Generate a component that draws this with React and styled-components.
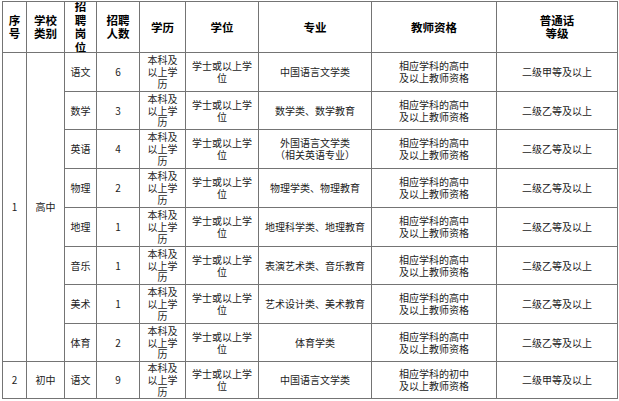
import React from 'react';
import styled, { createGlobalStyle } from 'styled-components';

const GlobalStyle = createGlobalStyle`
  html, body {
    margin: 0;
    padding: 0;
    background: #fff;
  }
  body {
    font-family: "Noto Sans CJK SC", "Noto Sans", sans-serif;
  }
`;

const Wrapper = styled.div`
  padding: 1px 0 0 2px;
`;

const Grid = styled.div`
  display: grid;
  grid-template-columns: 23px 37px 31px 42px 45px 72px 112px 124px 120px;
  grid-template-rows: 50px 38px 37px 38px 38px 38px 37px 38px 37px 36px;
  gap: 1px;
  padding: 1px;
  background: #747474;
  width: max-content;
`;

const Cell = styled.div`
  background: #fff;
  display: flex;
  flex-direction: column;
  align-items: center;
  justify-content: center;
  text-align: center;
  overflow: hidden;
  color: #222;
  font-size: 10px;
  line-height: 11.8px;
  grid-row: ${p => (p.$span ? `span ${p.$span}` : 'auto')};
`;

const HeadCell = styled(Cell)`
  color: #000;
  font-weight: 700;
  font-size: 11.5px;
  line-height: ${p => (p.$tight ? '13.5px' : '13px')};
`;

const Line = styled.span`
  display: block;
  white-space: nowrap;
`;

const headers = [
  ['序', '号'],
  ['学校', '类别'],
  ['招', '聘', '岗', '位'],
  ['招聘', '人数'],
  ['学历'],
  ['学位'],
  ['专业'],
  ['教师资格'],
  ['普通话', '等级'],
];

const highRows = [
  { subject: '语文', count: 6, major: ['中国语言文学类'], level: '二级甲等及以上' },
  { subject: '数学', count: 3, major: ['数学类、数学教育'], level: '二级乙等及以上' },
  { subject: '英语', count: 4, major: ['外国语言文学类', '（相关英语专业）'], level: '二级乙等及以上' },
  { subject: '物理', count: 2, major: ['物理学类、物理教育'], level: '二级乙等及以上' },
  { subject: '地理', count: 1, major: ['地理科学类、地理教育'], level: '二级乙等及以上' },
  { subject: '音乐', count: 1, major: ['表演艺术类、音乐教育'], level: '二级乙等及以上' },
  { subject: '美术', count: 1, major: ['艺术设计类、美术教育'], level: '二级乙等及以上' },
  { subject: '体育', count: 2, major: ['体育学类'], level: '二级乙等及以上' },
];

const Lines = ({ items }) => items.map((t, i) => <Line key={i}>{t}</Line>);

const RowCells = ({ row, stage }) => (
  <>
    <Cell>{row.subject}</Cell>
    <Cell>{row.count}</Cell>
    <Cell><Lines items={['本科及', '以上学', '历']} /></Cell>
    <Cell><Lines items={['学士或以上学', '位']} /></Cell>
    <Cell><Lines items={row.major} /></Cell>
    <Cell><Lines items={[`相应学科的${stage}`, '及以上教师资格']} /></Cell>
    <Cell>{row.level}</Cell>
  </>
);

export default function App() {
  return (
    <Wrapper>
      <GlobalStyle />
      <Grid>
        {headers.map((h, i) => (
          <HeadCell key={i} $tight={h.length > 2}>
            <Lines items={h} />
          </HeadCell>
        ))}
        <Cell $span={8}>1</Cell>
        <Cell $span={8}>高中</Cell>
        {highRows.map((r, i) => (
          <RowCells key={i} row={r} stage="高中" />
        ))}
        <Cell>2</Cell>
        <Cell>初中</Cell>
        <RowCells
          row={{ subject: '语文', count: 9, major: ['中国语言文学类'], level: '二级甲等及以上' }}
          stage="初中"
        />
      </Grid>
    </Wrapper>
  );
}
